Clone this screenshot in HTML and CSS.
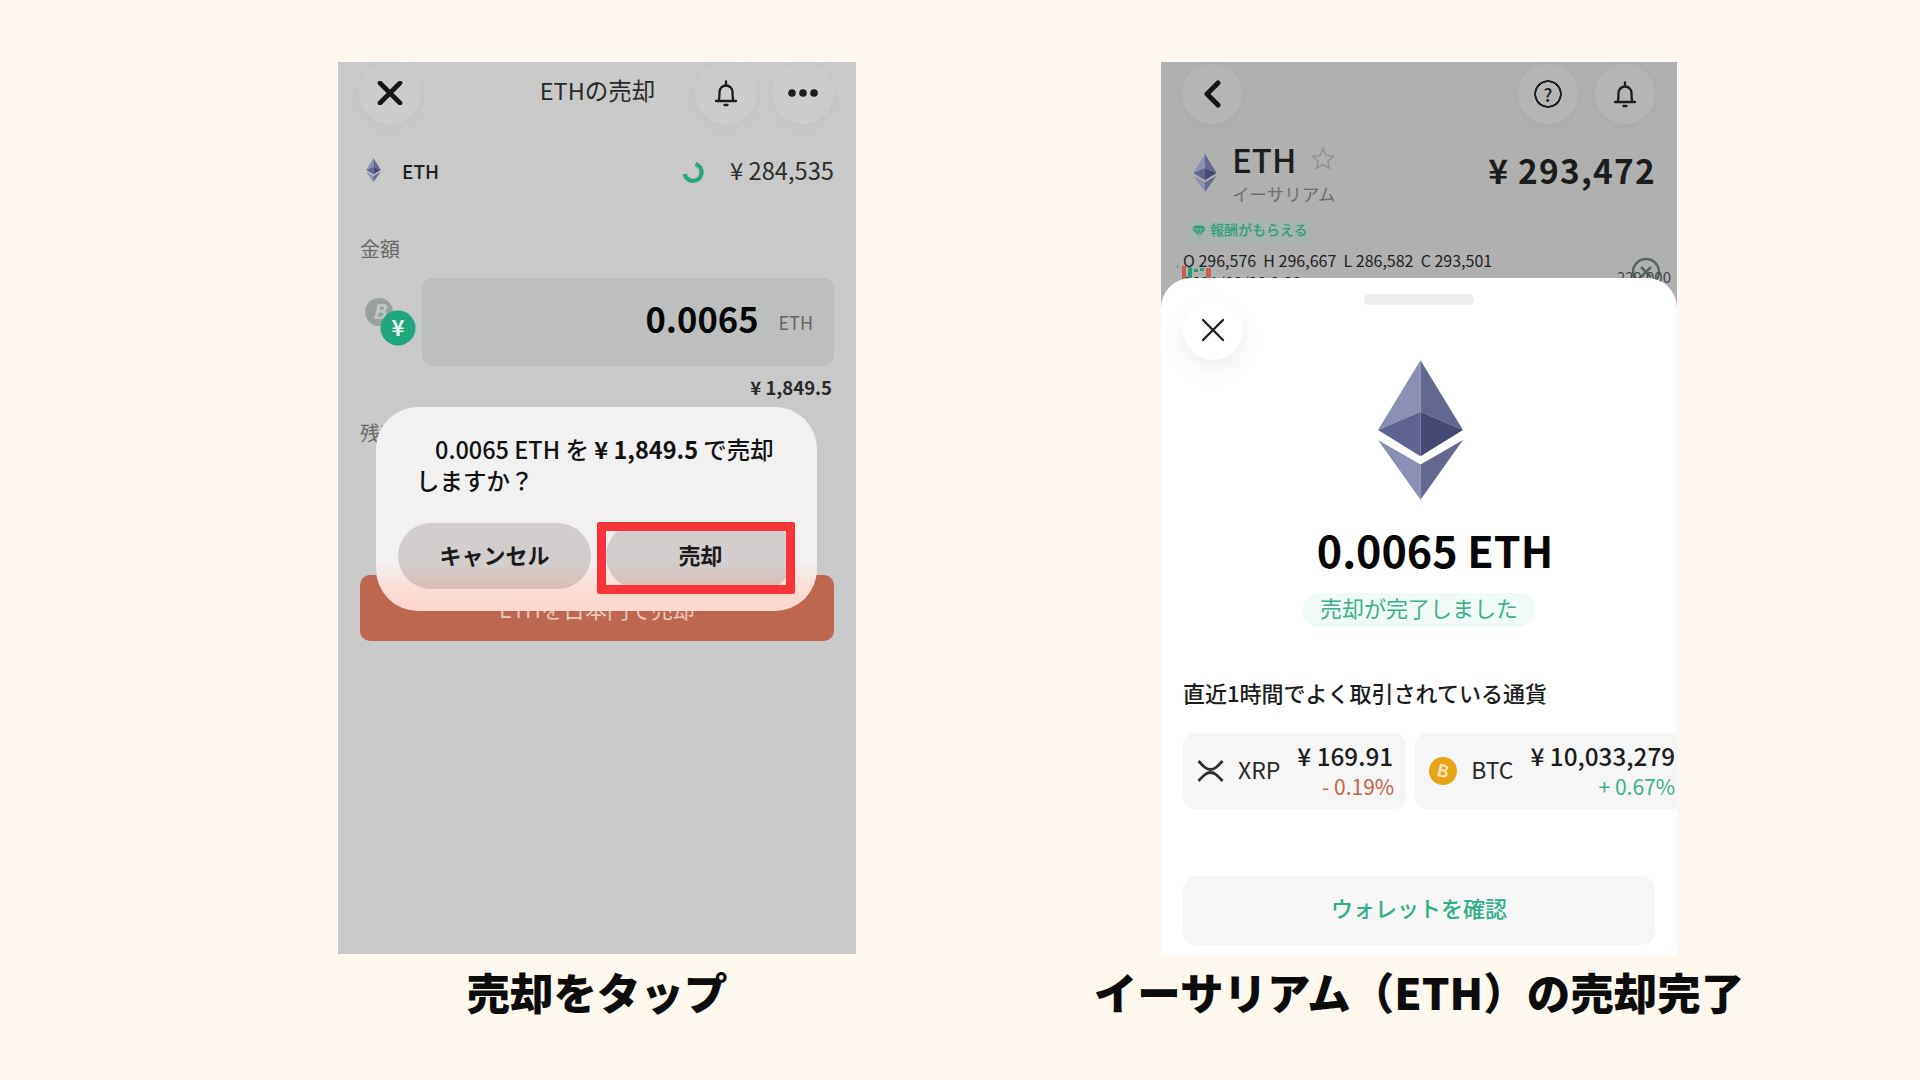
FILE: index.html
```html
<!DOCTYPE html>
<html lang="ja">
<head>
    <meta charset="utf-8" />
    <title>ETHの売却</title>
    <link rel="stylesheet" href="styles.css">
</head>
<body>
    <svg class="defs" width="0" height="0">
        <symbol id="eth" viewBox="0 0 84 138">
            <polygon points="42,0 0,69 42,51" fill="#8a90b3" />
            <polygon points="42,0 84,69 42,51" fill="#62688f" />
            <polygon points="0,69 42,51 42,95" fill="#5f6490" />
            <polygon points="84,69 42,51 42,95" fill="#454a75" />
            <polygon points="0,79 42,103 42,138" fill="#8a90b3" />
            <polygon points="84,79 42,103 42,138" fill="#62688f" />
        </symbol>
        <symbol id="bell" viewBox="0 0 24 28">
            <path d="M2 22h20M4.500 22c1-2 1-4 1-9a6.500 6.500 0 0 1 13 0c0 5 0 7 1 9M12 6V2.500M10.500 26h3" fill="none" stroke="#1c1c1c" stroke-width="2.300" stroke-linecap="round" />
        </symbol>
    </svg>

    <div class="page">
        <!-- left: confirm dialog -->
        <div class="col col-sell">
            <div class="screen sell">
                <div class="nav">
                    <div class="nav-side">
                        <div class="round">
                            <svg width="26" height="24" viewBox="0 0 26 24"><path d="M3 2l20 20M23 2L3 22" stroke="#161616" stroke-width="4.600" stroke-linecap="round" /></svg>
                        </div>
                    </div>
                    <div class="nav-title">ETHの売却</div>
                    <div class="nav-side right">
                        <div class="round"><svg width="24" height="28"><use href="#bell" /></svg></div>
                        <div class="round">
                            <svg width="30" height="8" viewBox="0 0 30 8"><circle cx="4" cy="4" r="3.800" fill="#1c1c1c" /><circle cx="15" cy="4" r="3.800" fill="#1c1c1c" /><circle cx="26" cy="4" r="3.800" fill="#1c1c1c" /></svg>
                        </div>
                    </div>
                </div>

                <div class="coin-row">
                    <svg class="coin-mark" width="15" height="24"><use href="#eth" /></svg>
                    <span class="coin-name">ETH</span>
                    <svg class="spinner" width="24" height="24" viewBox="0 0 24 24"><path d="M14.500 4.200A8.500 8.500 0 1 1 3.700 14" fill="none" stroke="#2aa77f" stroke-width="4.400" /></svg>
                    <span class="coin-price">¥ 284,535</span>
                </div>

                <div class="label label-amount">金額</div>
                <div class="amount-row">
                    <svg class="pair" width="62" height="88" viewBox="0 0 62 88">
                        <circle cx="19" cy="34" r="14" fill="#9aa09d" />
                        <text x="19" y="41" class="pair-b">B</text>
                        <circle cx="38" cy="50" r="17.500" fill="#1fa67c" />
                        <text x="38" y="58" class="pair-y">¥</text>
                    </svg>
                    <div class="amount-box">
                        <span class="amount-num">0.0065</span>
                        <span class="amount-unit">ETH</span>
                    </div>
                </div>
                <div class="amount-yen">¥ 1,849.5</div>
                <div class="label label-balance">残高</div>
                <div class="sell-btn">ETHを日本円で売却</div>

                <div class="dialog">
                    <p class="dialog-text"><span class="first">0.0065 ETH を <b>¥ 1,849.5</b> で売却</span><br />しますか？</p>
                    <div class="dialog-btns">
                        <div class="dialog-btn cancel">キャンセル</div>
                        <div class="dialog-btn confirm">売却</div>
                    </div>
                    <div class="red-box"></div>
                </div>
            </div>
            <div class="caption">売却をタップ</div>
        </div>

        <!-- right: sale finished -->
        <div class="col col-done">
            <div class="screen done">
                <div class="head">
                    <div class="nav nav-done">
                        <div class="round">
                            <svg width="18" height="28" viewBox="0 0 18 28"><path d="M15 3L4 14l11 11" fill="none" stroke="#161616" stroke-width="5" stroke-linecap="round" stroke-linejoin="round" /></svg>
                        </div>
                        <div class="nav-gap">
                            <div class="round help">?</div>
                            <div class="round"><svg width="24" height="28"><use href="#bell" /></svg></div>
                        </div>
                    </div>

                    <div class="ticker">
                        <svg class="ticker-mark" width="24" height="38"><use href="#eth" /></svg>
                        <div class="ticker-names">
                            <div class="ticker-top">
                                <span class="ticker-sym">ETH</span>
                                <svg width="24" height="23" viewBox="0 0 24 23"><path d="M12 1.500l3 7 7.500.7-5.700 5 1.700 7.300L12 17.600 5.500 21.500l1.700-7.300-5.700-5 7.500-.7z" fill="none" stroke="#8e8e8e" stroke-width="1.300" /></svg>
                            </div>
                            <div class="ticker-jp">イーサリアム</div>
                        </div>
                        <div class="ticker-price">¥ 293,472</div>
                    </div>

                    <div class="reward">
                        <svg width="14" height="12" viewBox="0 0 14 12"><path d="M3 .500h8L14 4l-7 7.500L0 4z" fill="#2f9e78" /><path d="M0 4h14M4.500 4L7 11l2.500-7" fill="none" stroke="#a6b5ae" stroke-width=".8" /></svg>
                        <span>報酬がもらえる</span>
                    </div>
                    <div class="ohlc">O 296,576 &nbsp;H 296,667 &nbsp;L 286,582 &nbsp;C 293,501<br />2021/02/22 0:00</div>

                    <svg class="candles" width="38" height="14" viewBox="0 0 38 14">
                        <rect x="6" y="1" width="4" height="13" fill="#c9604a" />
                        <rect x="12" y="2" width="4" height="12" fill="#2f9e78" />
                        <rect x="18" y="4" width="4" height="3" fill="#2f9e78" />
                        <rect x="24" y="3" width="4" height="3" fill="#2f9e78" />
                        <rect x="30" y="3" width="5" height="11" fill="#c9604a" />
                        <rect x="1" y="0" width="1" height="3" fill="#2f9e78" />
                    </svg>
                    <div class="chart-close">
                        <svg width="30" height="30" viewBox="0 0 30 30"><circle cx="15" cy="15" r="13" fill="none" stroke="#52665e" stroke-width="2.500" /><path d="M10 10l10 10M20 10L10 20" stroke="#52665e" stroke-width="2.500" /></svg>
                    </div>
                    <div class="chart-tick">229,000</div>
                </div>

                <div class="sheet">
                    <div class="handle"></div>
                    <div class="sheet-close">
                        <svg width="24" height="24" viewBox="0 0 24 24"><path d="M2 2l20 20M22 2L2 22" stroke="#1c1c1c" stroke-width="2.300" stroke-linecap="round" /></svg>
                    </div>
                    <svg class="big-eth" width="85" height="140"><use href="#eth" /></svg>
                    <div class="big-amount">0.0065 ETH</div>
                    <div class="done-pill">売却が完了しました</div>
                    <div class="recent">直近1時間でよく取引されている通貨</div>
                    <div class="cards">
                        <div class="card">
                            <svg width="27" height="24" viewBox="0 0 27 24"><path d="M1.500 2C7 8 9.500 10.500 13.500 10.500S20 8 25.500 2M1.500 22C7 16 9.500 13.500 13.500 13.500S20 16 25.500 22" fill="none" stroke="#2e2e2e" stroke-width="2.800" /></svg>
                            <span class="card-sym">XRP</span>
                            <div class="card-nums">
                                <div class="card-price">¥ 169.91</div>
                                <div class="card-change down">- 0.19%</div>
                            </div>
                        </div>
                        <div class="card">
                            <svg width="28" height="28" viewBox="0 0 28 28"><circle cx="14" cy="14" r="14" fill="#e8a317" /><text x="14" y="20" class="btc-b" transform="rotate(12 14 14)">B</text></svg>
                            <span class="card-sym">BTC</span>
                            <div class="card-nums">
                                <div class="card-price">¥ 10,033,279</div>
                                <div class="card-change up">+ 0.67%</div>
                            </div>
                        </div>
                    </div>
                    <div class="wallet-btn">ウォレットを確認</div>
                </div>
            </div>
            <div class="caption">イーサリアム（ETH）の売却完了</div>
        </div>
    </div>
</body>
</html>
```

FILE: styles.css
```css
body {
    margin: 0;
    background: #fff8ee;
    color: #1c1c1c;
    font-family: "Noto Sans CJK JP", "Noto Sans", sans-serif;
}

.defs {
    position: absolute;
}

.page {
    display: flex;
    gap: 305px;
    height: 1080px;
    padding: 62px 0 0 338px;
    box-sizing: border-box;
    overflow: hidden;
}

.col {
    display: flex;
    flex: none;
    flex-direction: column;
    align-items: center;
}

.col-sell {
    width: 518px;
}

.col-done {
    width: 516px;
}

.caption {
    flex: none;
    margin-top: 11px;
    font-size: 43.500px;
    line-height: 54px;
    font-weight: 900;
    color: #0c0c0c;
    white-space: nowrap;
}

.col-done .caption {
    margin-top: 9px;
}

.screen {
    position: relative;
    flex: none;
    overflow: hidden;
}

/* left screen */
.sell {
    width: 518px;
    height: 892px;
    padding: 0 22px;
    box-sizing: border-box;
    background: #c9c9c9;
}

.nav {
    display: grid;
    grid-template-columns: 1fr auto 1fr;
    align-items: center;
    height: 60px;
    margin: 0 -2px 0 -1px;
}

.nav-side {
    display: flex;
    gap: 15px;
}

.nav-side.right {
    justify-content: flex-end;
    margin-right: 2px;
}

.nav-title {
    padding-bottom: 6px;
    font-size: 23.500px;
    color: #2a2a2a;
}

.round {
    display: flex;
    flex: none;
    align-items: center;
    justify-content: center;
    width: 62px;
    height: 62px;
    border-radius: 50%;
    background: rgba(255, 255, 255, 0.07);
    box-shadow: 0 4px 12px rgba(0, 0, 0, 0.03);
}

.coin-row {
    display: flex;
    align-items: center;
    height: 30px;
    margin-top: 33px;
}

.coin-mark {
    margin-left: 6px;
}

.coin-name {
    margin-left: 21px;
    font-size: 19px;
    font-weight: 500;
}

.spinner {
    margin-left: auto;
    margin-top: 3px;
}

.coin-price {
    margin-left: 25px;
    font-size: 23.700px;
    color: #2e2e2e;
}

.label {
    height: 28px;
    font-size: 20px;
    line-height: 28px;
    color: #6a6a6a;
}

.label-amount {
    margin-top: 50px;
}

.label-balance {
    margin-top: 19px;
}

.amount-row {
    display: flex;
    margin-top: 15px;
}

.amount-box {
    display: flex;
    flex: 1;
    align-items: center;
    justify-content: flex-end;
    height: 88px;
    padding: 0 20px 8px 0;
    box-sizing: border-box;
    border-radius: 10px;
    background: #bdbfbe;
}

.pair-b {
    font-size: 20px;
    font-weight: 700;
    font-style: italic;
    text-anchor: middle;
    fill: #c2c6c4;
}

.pair-y {
    font-size: 22px;
    font-weight: 700;
    text-anchor: middle;
    fill: #e6f5ef;
}

.amount-num {
    font-size: 34.500px;
    font-weight: 700;
    color: #060606;
}

.amount-unit {
    margin: 8px 1px 0 20px;
    font-size: 18px;
    color: #666;
}

.amount-yen {
    height: 23px;
    margin-top: 9px;
    padding: 0 2px 2px 0;
    font-size: 18.500px;
    line-height: 24px;
    font-weight: 700;
    text-align: right;
    color: #2a2a2a;
}

.sell-btn {
    height: 66px;
    margin-top: 128px;
    border-radius: 10px;
    background: #bd6650;
    font-size: 22px;
    line-height: 66px;
    text-align: center;
    color: #e8c7bd;
}

.dialog {
    position: absolute;
    top: 345px;
    left: 38px;
    width: 441px;
    height: 204px;
    padding: 27px 18px 0 40px;
    box-sizing: border-box;
    border-radius: 42px;
    background: linear-gradient(#f1f1f1 0%, #f2f0f0 76%, #fcdcd3 90%, #fcd7cd 100%);
}

.dialog-text {
    margin: 0;
    font-size: 23.500px;
    line-height: 31px;
    font-weight: 500;
    white-space: nowrap;
    color: #111;
}

.dialog-text .first {
    margin-left: 19px;
}

.dialog-text b {
    font-weight: 700;
}

.dialog-btns {
    display: flex;
    gap: 15px;
    margin: 27px 0 0 -18px;
}

.dialog-btn {
    height: 66px;
    border-radius: 33px;
    background: rgba(50, 30, 25, 0.16);
    font-size: 22px;
    line-height: 62px;
    font-weight: 700;
    text-align: center;
    color: #1a1a1a;
}

.cancel {
    width: 193px;
}

.confirm {
    width: 189px;
}

.red-box {
    position: absolute;
    top: 115px;
    left: 221px;
    width: 198px;
    height: 72px;
    box-sizing: border-box;
    border: 9px solid #f8343a;
    border-radius: 2px;
}

/* right screen */
.done {
    width: 516px;
    height: 894px;
}

.head {
    position: relative;
    height: 246px;
    padding: 0 22px;
    box-sizing: border-box;
    background: #b0b0b0;
}

.nav-done {
    display: flex;
    justify-content: space-between;
    height: 64px;
    margin: 0 0 0 -1px;
}

.nav-done .round {
    width: 60px;
    height: 60px;
}

.nav-gap {
    display: flex;
    gap: 17px;
}

.help {
    font-size: 18px;
    font-weight: 500;
    background-image: radial-gradient(circle, transparent 0 11.500px, #1c1c1c 12px 13.500px, transparent 14px);
}

.ticker {
    display: flex;
    align-items: center;
    height: 62px;
    margin-top: 16px;
}

.ticker-mark {
    margin: 0 15px 0 10px;
}

.ticker-top {
    display: flex;
    align-items: center;
    gap: 15px;
    height: 36px;
}

.ticker-sym {
    height: 36px;
    font-size: 33px;
    line-height: 36px;
    font-weight: 500;
}

.ticker-jp {
    margin-top: 5px;
    font-size: 17.500px;
    line-height: 24px;
    color: #6e6e6e;
}

.ticker-price {
    margin: 0 -1px 8px auto;
    font-size: 33.500px;
    font-weight: 700;
    letter-spacing: 1.200px;
}

.reward {
    display: flex;
    align-items: center;
    gap: 4px;
    width: 121px;
    height: 22px;
    margin: 16px 0 0 5px;
    padding-left: 4px;
    box-sizing: border-box;
    background: #a6b5ae;
    font-size: 14px;
    font-weight: 500;
    white-space: nowrap;
    color: #2f9e78;
}

.reward span {
    margin-top: -4px;
}

.ohlc {
    margin-top: 7px;
    font-size: 16px;
    line-height: 22px;
    white-space: nowrap;
    color: #222;
}

.candles {
    position: absolute;
    top: 203px;
    left: 15px;
}

.chart-close {
    position: absolute;
    top: 195px;
    left: 470px;
}

.chart-tick {
    position: absolute;
    top: 204px;
    right: 6px;
    font-size: 15px;
    color: #444;
}

.sheet {
    position: relative;
    display: flex;
    flex-direction: column;
    height: 678px;
    margin-top: -30px;
    padding: 16px 22px 0;
    box-sizing: border-box;
    overflow: hidden;
    border-radius: 30px 30px 0 0;
    background: #fff;
}

.handle {
    align-self: center;
    flex: none;
    width: 110px;
    height: 11px;
    border-radius: 6px;
    background: #eee;
}

.sheet-close {
    display: flex;
    flex: none;
    align-items: center;
    justify-content: center;
    width: 60px;
    height: 60px;
    margin-top: -5px;
    border-radius: 50%;
    background: #fff;
    box-shadow: 0 10px 24px rgba(0, 0, 0, 0.07);
}

.big-eth {
    align-self: center;
    flex: none;
    margin: 0 0 0 2px;
}

.big-amount {
    flex: none;
    height: 44px;
    margin-top: 30px;
    padding-left: 32px;
    font-size: 43px;
    line-height: 39px;
    font-weight: 700;
    text-align: center;
    color: #060606;
}

.done-pill {
    align-self: center;
    flex: none;
    height: 34px;
    margin-top: 19px;
    padding: 0 17px;
    border-radius: 17px;
    background: #f0faf6;
    font-size: 22px;
    line-height: 28px;
    color: #3bb08c;
}

.recent {
    flex: none;
    margin-top: 50px;
    font-size: 22px;
    line-height: 31px;
    font-weight: 500;
}

.cards {
    display: flex;
    flex: none;
    gap: 9px;
    margin: 25px -22px 0 0;
    overflow: hidden;
}

.card {
    display: flex;
    flex: none;
    align-items: center;
    height: 76px;
    padding: 0 13px 0 14px;
    border-radius: 12px;
    background: #f6f6f6;
}

.card-sym {
    margin: -4px 17px 0 14px;
    font-size: 23px;
    color: #2a2a2a;
}

.card-nums {
    text-align: right;
}

.card-price {
    font-size: 24.300px;
    line-height: 30px;
    font-weight: 500;
}

.card-change {
    font-size: 21px;
    line-height: 30px;
}

.card-change.down {
    margin-right: -1px;
    color: #c9604a;
}

.card-change.up {
    color: #3bb08c;
}

.btc-b {
    font-size: 17px;
    font-weight: 700;
    text-anchor: middle;
    fill: #fbe6b8;
}

.wallet-btn {
    flex: none;
    height: 69px;
    margin-top: 67px;
    border-radius: 14px;
    background: #f6f6f6;
    font-size: 22px;
    line-height: 62px;
    font-weight: 500;
    text-align: center;
    color: #2fb08a;
}
```
